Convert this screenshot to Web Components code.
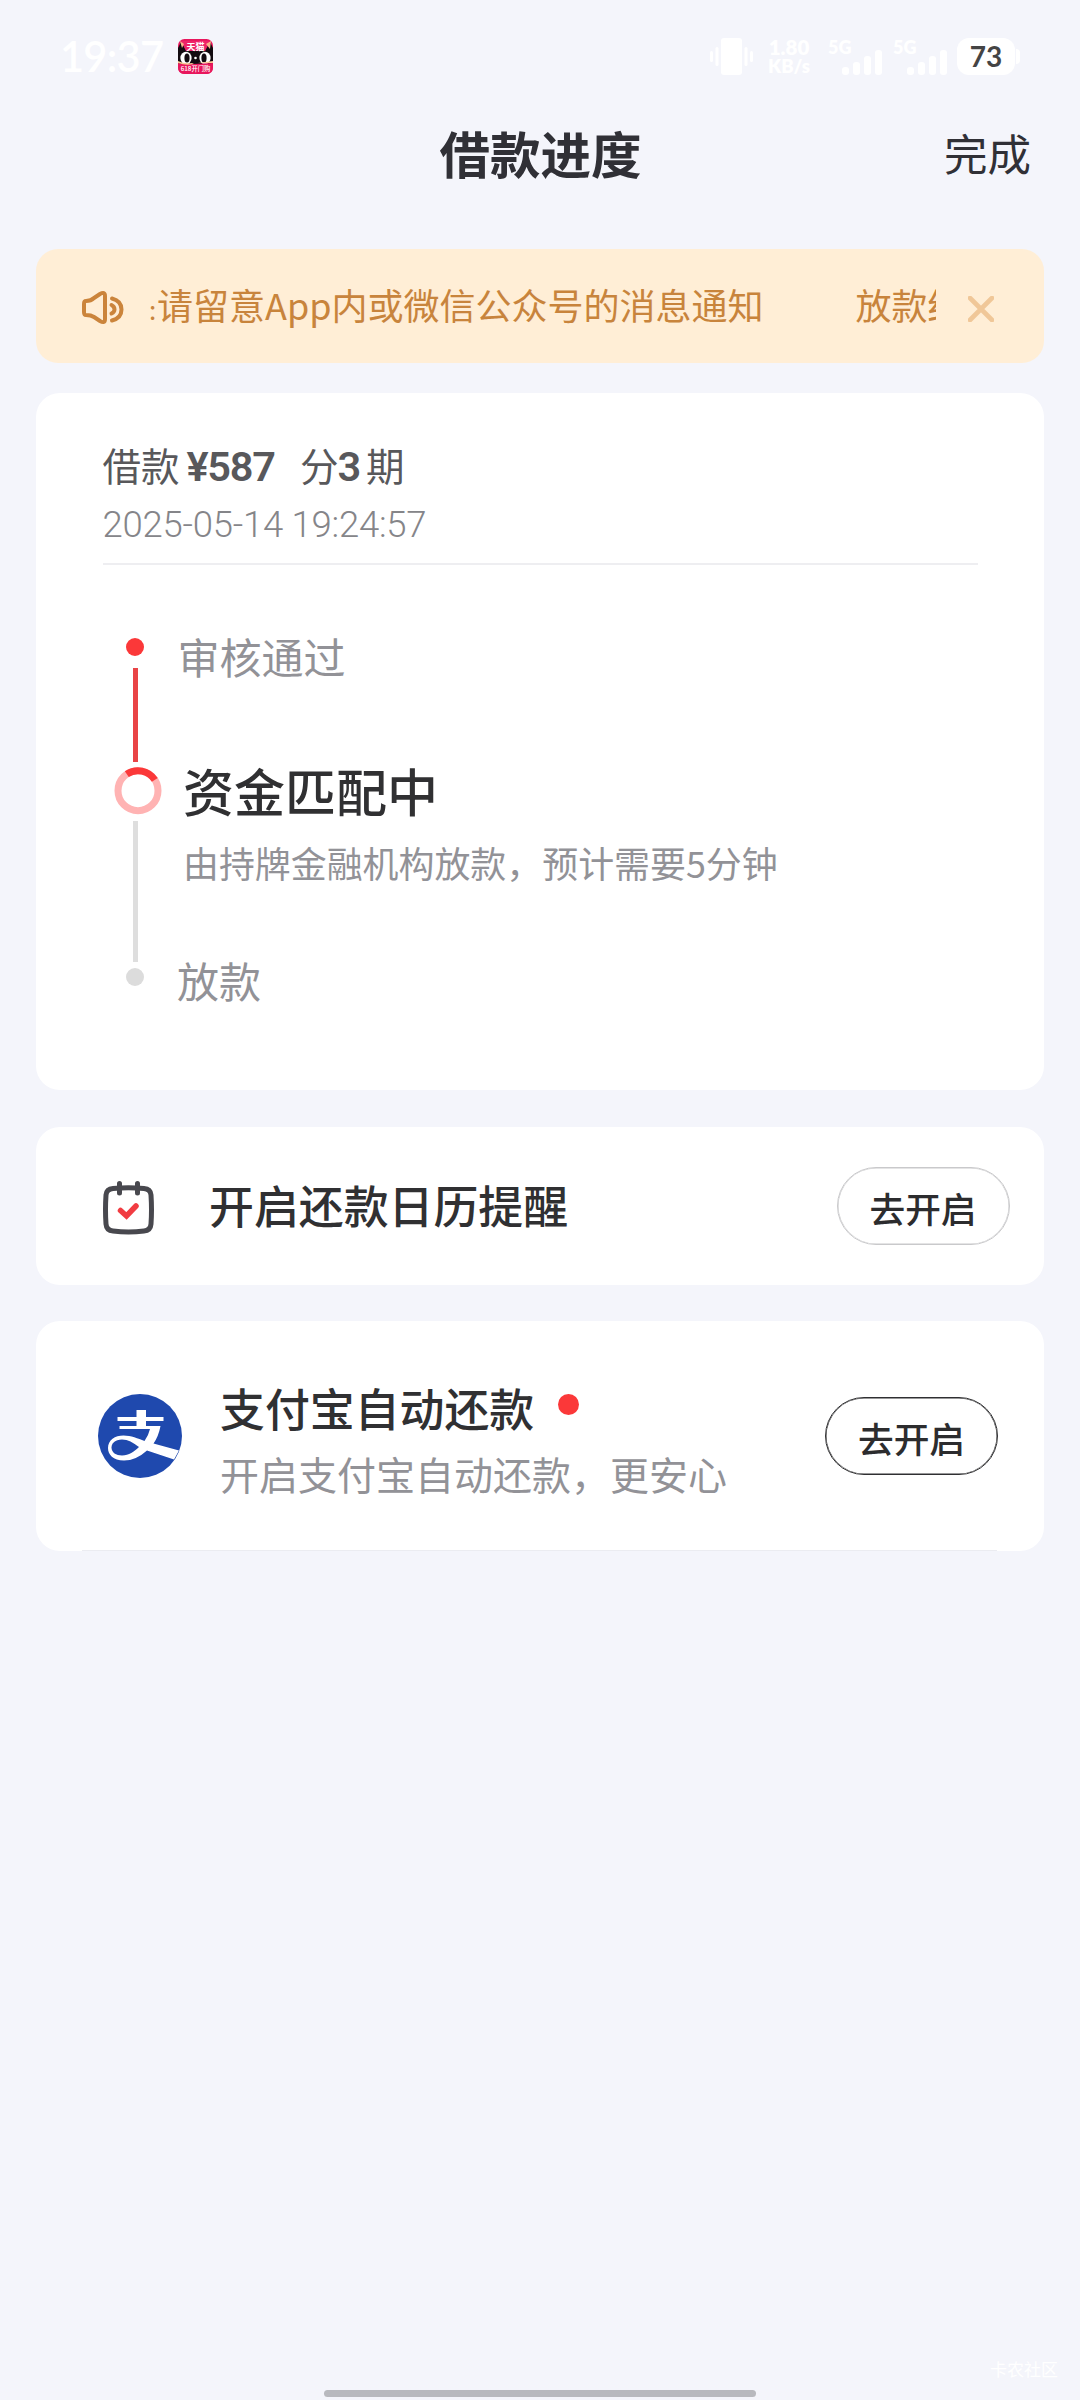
<!DOCTYPE html>
<html lang="zh-CN">
<head>
<meta charset="utf-8">
<title>借款进度</title>
<style>
html,body{margin:0;padding:0}
body{width:1080px;height:2400px;overflow:hidden;background:#f4f5fb;font-family:"Noto Sans CJK SC",sans-serif}
</style>
</head>
<body>
<loan-page></loan-page>
<script>
const define = (name, html) => {
  const t = document.createElement('template');
  t.innerHTML = html;
  customElements.define(name, class extends HTMLElement {
    constructor() {
      super();
      this.attachShadow({mode: 'open'}).appendChild(t.content.cloneNode(true));
    }
  });
};

define('status-bar', `
<style>
:host{display:flex;height:112px;box-sizing:border-box;padding:38px 60px 0 60px;align-items:flex-start;color:#fff;font-family:Lato,sans-serif}
.time{font-size:41.500px;line-height:37px;font-weight:600;width:101px;letter-spacing:-.7px;white-space:nowrap}
.app{margin:1px auto 0 17px;width:35px;height:35px}
svg{display:block;flex:none}
.vib{margin-right:13px}
.speed{width:46px;font-size:20.500px;line-height:19px;font-weight:800;text-align:center;margin-right:16px;white-space:nowrap;display:flex;flex-direction:column;align-items:center}
.speed div+div{font-size:18.500px;line-height:19px}
.sig{display:flex;position:relative;margin-right:10px;width:55px;height:37px}
.sig span{position:absolute;left:0;top:0;font-size:18px;line-height:18px;font-weight:800}
.bat{width:63px;height:37px;margin-left:-1px;display:flex}
.bat b{width:58px;border-radius:12px;background:#fff;color:#444;font-size:28px;line-height:37px;text-align:center;font-weight:700}
.bat i{width:4px;height:15px;margin:11px 0 0 1px;border-radius:0 4px 4px 0;background:#fff}
</style>
<div class="time">19:37</div>
<svg class="app" viewBox="0 0 35 35">
  <rect width="35" height="35" rx="6.500" fill="#e8175d"/>
  <path d="M0 9 L3 3 L9 12 H27 L32 3 L35 9 V25 H0Z" fill="#120b10"/>
  <path d="M3 2 L8 12 H27 L31 2Z" fill="#ee2468"/>
  <path d="M2 2l4 3-2 4zM33 2l-5 3 4 5z" fill="#f7b78b"/>
  <ellipse cx="8" cy="19" rx="5.600" ry="6.300" fill="#fff"/><ellipse cx="9" cy="19" rx="2.600" ry="4.600" fill="#120b10"/>
  <ellipse cx="27" cy="19" rx="5.600" ry="6.300" fill="#fff"/><ellipse cx="26" cy="19" rx="2.600" ry="4.600" fill="#120b10"/>
  <circle cx="17.500" cy="19" r="1.300" fill="#fff"/>
  <path d="M0 24 Q7 26 15 25 L35 24 V28.500 Q35 35 28.500 35 H6.500 Q0 35 0 28.500Z" fill="#e8175d"/>
  <path d="M0 22 Q6 25 14 24 L16 25 Q8 27 0 24ZM20 24l15-2v2z" fill="#fbc695"/>
  <text x="17.500" y="10.500" font-size="9" font-weight="700" text-anchor="middle" fill="#fff" font-family="Noto Sans CJK SC">天猫</text>
  <text x="17.500" y="32" font-size="6.300" font-weight="500" text-anchor="middle" fill="#fff" font-family="Noto Sans CJK SC">618开门购</text>
</svg>
<svg class="vib" width="43" height="37" viewBox="0 0 43 37" fill="#fff"><rect x="11" width="21" height="37" rx="3"/><rect x="5.500" y="9" width="3" height="19" rx="1.500"/><rect x="0" y="13" width="3" height="11" rx="1.500"/><rect x="34.500" y="9" width="3" height="19" rx="1.500"/><rect x="40" y="13" width="3" height="11" rx="1.500"/></svg>
<div class="speed"><div>1.80</div><div>KB/s</div></div>
<div class="sig"><span>5G</span><svg width="55" height="37" viewBox="0 0 55 37" fill="#fff"><rect x="14" y="29" width="7" height="8" rx="3"/><rect x="25" y="24" width="7" height="13" rx="3"/><rect x="36" y="18" width="7" height="19" rx="3"/><rect x="47" y="12" width="7" height="25" rx="3"/></svg></div>
<div class="sig"><span>5G</span><svg width="55" height="37" viewBox="0 0 55 37" fill="#fff"><rect x="14" y="29" width="7" height="8" rx="3"/><rect x="25" y="24" width="7" height="13" rx="3"/><rect x="36" y="18" width="7" height="19" rx="3"/><rect x="47" y="12" width="7" height="25" rx="3"/></svg></div>
<div class="bat"><b>73</b><i></i></div>
`);

define('nav-bar', `
<style>
:host{display:grid;grid-template-columns:1fr auto 1fr;height:137px;align-items:start;padding:0 49px;color:#303036}
.title{font-size:50.500px;font-weight:700;line-height:80px;padding:0 0 0 1px}
.done{font-size:43.500px;justify-self:end;line-height:80px;padding-top:1px}
</style>
<span></span><div class="title"><slot></slot></div><div class="done"><slot name="action"></slot></div>
`);

define('notice-bar', `
<style>
:host{display:flex;align-items:center;height:114px;margin:0 36px;border-radius:22px;background:#ffeed6;color:#c8843c;box-sizing:border-box;padding:0 48px 0 45px}
.say{width:44px;height:36px;margin-top:4px}
.clip{width:787px;margin:0 32px 0 24px;overflow:hidden;font-size:36px;line-height:54px;display:flex;white-space:nowrap;justify-content:flex-start}
.run{display:flex;gap:92px}
.c{display:inline-block;font-size:26px;width:8px}
.x{margin-top:5px}
svg{display:block;flex:none}
</style>
<svg class="say" viewBox="0 0 44 36" fill="none" stroke="#cb843b" stroke-width="4" stroke-linecap="round" stroke-linejoin="round"><path d="M5 11 Q10 11 13 8 L19 4 Q24 1 24 6 V29 Q24 34 19 31 L13 27 Q10 25 5 25 Q3 25 3 22 V14 Q3 11 5 11Z"/><path d="M31 8.500 Q40.500 11 40.500 19.500 Q40.500 28 31 30.500"/><path d="M30.500 15 Q33.500 16.500 33.500 19.500 Q33.500 22 30.500 23.500"/></svg>
<div class="clip"><div class="run"><span><span class="c">:</span>请留意App内或微信公众号的消息通知</span><span>放款结果</span></div></div>
<svg class="x" width="26" height="26" viewBox="0 0 26 26" stroke="#f0c798" stroke-width="4.600" stroke-linecap="round"><path d="M2 2 24 24M24 2 2 24"/></svg>
`);

define('info-card', `
<style>
:host{display:block;margin:0 36px;background:#fff;border-radius:24px;box-sizing:border-box}
</style><slot></slot>
`);

define('loan-summary', `
<style>
:host{display:block;margin:0 66.500px;padding-top:47px;height:123px;border-bottom:2px solid #eeeef1;color:#58585b}
.row{display:flex;align-items:baseline;font-size:38.500px;line-height:48px;height:61px;white-space:nowrap}
b{font-family:Roboto,sans-serif;font-weight:600;font-size:41.500px;letter-spacing:-1.3px}
.amt{margin-left:7px;width:92px}
.per{margin-left:21.500px}
.n{margin:0 6px 0 -1px}
.date{font-family:Roboto,sans-serif;font-weight:300;font-size:36.500px;line-height:48px;color:#858589;white-space:nowrap;letter-spacing:-.25px}
</style>
<div class="row"><span>借款</span><b class="amt">¥587</b><span class="per">分</span><b class="n">3</b><span>期</span></div>
<div class="date">2025-05-14 19:24:57</div>
`);

define('progress-step', `
<style>
:host{display:flex;height:130px;color:#929297}
:host([state=active]){height:200px}
:host([state=todo]){height:60px}
.rail{width:48px;display:flex;flex-direction:column;align-items:flex-start;flex:none}
.mark{width:18px;height:18px;border-radius:50%;margin-left:12px;background:#fb3839}
.line{width:5px;height:94px;margin:12px 0 0 18.500px;background:#e94446}
svg{display:none;width:48px;height:48px;margin-top:-1px}
:host([state=active]) .mark,:host([state=todo]) .line{display:none}
:host([state=active]) svg{display:block}
:host([state=active]) .line{background:#dedede;height:141px;margin-top:6px}
:host([state=todo]) .mark{background:#dcdcdc}
.text{margin:-3px 0 0 15.500px;font-size:42px;line-height:42px;white-space:nowrap}
:host([state=active]) .text{margin:-3px 0 0 21px;font-size:51px;line-height:51px;font-weight:500;color:#303032}
:host([state=todo]) .text{margin-top:-9px;margin-left:15px}
::slotted([slot=note]){display:block;font-size:35.930px;line-height:36px;font-weight:400;color:#929297;margin-top:28px}
</style>
<div class="rail"><div class="mark"></div>
<svg viewBox="0 0 48 48" fill="none" stroke-width="7"><circle cx="24" cy="23.700" r="20" stroke="#ffb3b3"/><path d="M12.800 7.100A20 20 0 0 1 40.800 12.900" stroke="#fb3839"/></svg>
<div class="line"></div></div>
<div class="text"><slot></slot><slot name="note"></slot></div>
`);

define('pill-button', `
<style>
:host{display:block;box-sizing:border-box;width:173px;height:78px;border:1px solid var(--edge,#c9c9cb);box-shadow:inset 0 0 0 .5px var(--edge,#c9c9cb);border-radius:39px;font-size:35.700px;line-height:79px;text-align:center;color:#2c2c2e;font-weight:500;flex:none}
</style><slot></slot>
`);

define('calendar-icon', `
<style>:host{display:block;width:51px;height:54px}svg{display:block}</style>
<svg width="51" height="54" viewBox="0 0 51 54" fill="none" stroke-linecap="round" stroke-linejoin="round"><path d="M10 7.500 Q25.500 6 41 7.500 Q47.500 8 48 14 Q49 29 48 43 Q47.500 49.500 41 50 Q25.500 52 10 50 Q3.500 49.500 3 43 Q2 29 3 14 Q3.500 8 10 7.500Z" stroke="#48484e" stroke-width="5"/><path d="M16.500 2.500V12M34.500 2.500V12" stroke="#48484e" stroke-width="5"/><path d="M17.500 29.500 23.500 35 33 25" stroke="#f13c42" stroke-width="5.500" stroke-linejoin="miter"/></svg>
`);

define('alipay-icon', `
<style>:host{display:block;width:84px;height:84px}svg{display:block}</style>
<svg width="84" height="84" viewBox="0 0 84 84"><defs><clipPath id="c"><circle cx="42" cy="42" r="42"/></clipPath></defs><g clip-path="url(#c)"><rect width="84" height="84" fill="#1f49ae"/>
<path d="M38.500 16H48V23H65.500V27H48V32H62.500Q60.500 42.500 55.500 49.500L81 56.500L76 65.500L49 56.500Q38 66.500 26 66.500C15 66.500 10 60.500 10 54C10 46 17 41.500 25.500 41.500C33 41.500 40 44.500 46.500 47Q50.500 41.500 52 35H21.500V32H38.500V27H19.500V23H38.500Z" fill="#fff"/>
<path d="M41 53C35 48.500 30 45.500 24 45.500C17 45.500 13.500 49.500 13.500 53.500C13.500 58.500 18 61.500 24 61.500C31 61.500 36 57.500 41 53Z" fill="#1f49ae"/></g></svg>
`);

define('action-row', `
<style>
:host{display:flex;color:#303032;height:100%;box-sizing:border-box}
.body{flex:1;white-space:nowrap}
.t{font-size:44.900px;line-height:45px;font-weight:500;display:flex;align-items:center}
::slotted([slot=note]){display:block;font-size:39px;line-height:39px;color:#929297;margin-top:24px}
::slotted(i){width:21px;height:21px;border-radius:50%;background:#fb3839;margin:-6px 0 0 24px}
</style>
<slot name="icon"></slot>
<div class="body"><div class="t"><slot></slot><slot name="dot"></slot></div><slot name="note"></slot></div>
<slot name="button"></slot>
`);

define('loan-page', `
<style>
:host{display:flex;flex-direction:column;width:1080px;height:2400px;background:#f4f5fb}
.progress{height:697px;margin-top:30px}
.steps{padding:73px 0 0 78px}
.cal{height:158px;margin-top:37px}
.cal action-row{padding:55px 34.500px 0 67px}
.cal calendar-icon{margin:-1px 55px 0 0}
.cal pill-button{margin-top:-15px}
.ali{height:230px;margin-top:36px}
.ali action-row{padding:64px 46px 0 62px}
.ali alipay-icon{margin:9px 38px 0 0}
.ali pill-button{--edge:#303032;margin-top:12px}
.hair{height:1px;margin:-1px 83px 0 82px;background:#ebecf1}
footer{margin-top:auto;height:46px;display:grid;grid-template-columns:324px 432px 1fr;align-items:start}
.home{grid-column:2;height:7px;border-radius:4px;background:#b8b9be;margin-top:36px}
.mark{font-size:17px;line-height:20px;color:#fff;justify-self:end;margin:5px 22px 0 0}
</style>
<status-bar></status-bar>
<nav-bar>借款进度<span slot="action">完成</span></nav-bar>
<notice-bar></notice-bar>
<info-card class="progress"><loan-summary></loan-summary>
<div class="steps">
<progress-step state="done">审核通过</progress-step>
<progress-step state="active">资金匹配中<span slot="note">由持牌金融机构放款，预计需要5分钟</span></progress-step>
<progress-step state="todo">放款</progress-step>
</div></info-card>
<info-card class="cal"><action-row><calendar-icon slot="icon"></calendar-icon>开启还款日历提醒<pill-button slot="button">去开启</pill-button></action-row></info-card>
<info-card class="ali"><action-row><alipay-icon slot="icon"></alipay-icon>支付宝自动还款<i slot="dot"></i><span slot="note">开启支付宝自动还款，更安心</span><pill-button slot="button">去开启</pill-button></action-row></info-card>
<div class="hair"></div>
<footer><div class="home"></div><div class="mark">卡农社区</div></footer>
`);
</script>
</body>
</html>
